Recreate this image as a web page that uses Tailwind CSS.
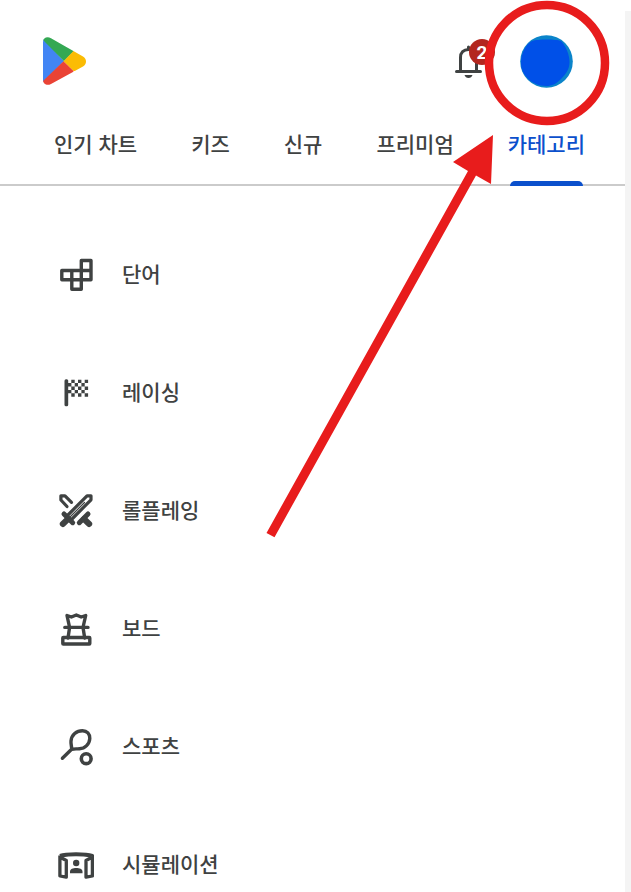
<!DOCTYPE html>
<html lang="ko">
<head>
<meta charset="utf-8">
<meta name="viewport" content="width=device-width, initial-scale=1">
<title>카테고리</title>
<script src="https://cdn.jsdelivr.net/npm/@tailwindcss/browser@4"></script>
</head>
<body class="bg-white">
<div class="relative flex h-screen overflow-hidden font-['Noto_Sans_CJK_KR',sans-serif] text-[21px] leading-8 font-medium text-[#3f4242]">
  <main class="flex min-w-0 flex-1 flex-col">
    <header class="flex h-[116px] shrink-0 items-center justify-between pt-1.5 pr-[52px] pl-[42px]">
      <a href="#" aria-label="Play 스토어">
        <svg class="h-12 w-11" viewBox="0 0 44 48">
          <defs><clipPath id="play"><path d="M1 5C1 1 5-1 9 1.200L41 19.500C45 22 45 27 41 29.500L9 47C5 49.200 1 47 1 43Z"/></clipPath></defs>
          <g clip-path="url(#play)">
            <path fill="#4285f4" d="M0 0L22 24.300L0 46Z"/>
            <path fill="#34a853" d="M0 2L22 24.300L32 14V-2H0Z"/>
            <path fill="#fbbc04" d="M21.500 24.300L31.500 14L48 14V34H31.500Z"/>
            <path fill="#ea4335" d="M0 45L21.500 24.300L31.500 34V50H0Z"/>
          </g>
        </svg>
      </a>
      <div class="flex items-center gap-[38px]">
        <button type="button" aria-label="알림 2개" class="relative h-9 w-[27px]">
          <svg class="h-9 w-[27px]" viewBox="0 0 27 36" fill="none" stroke="#3f4242" stroke-width="3">
            <path d="M1.500 28.500H25.500" stroke-linecap="round"/>
            <path d="M5.500 28V14.500C5.500 9.500 8.500 6.500 13.500 6.500S21.500 9.500 21.500 14.500V28"/>
            <path d="M13.500 6V4" stroke-linecap="round"/>
            <path d="M9.500 32H17.500Q16.500 35 13.500 35T9.500 32Z" fill="#3f4242" stroke="none"/>
          </svg>
          <span class="absolute -top-1 left-[14px] flex h-[26px] w-[26px] items-center justify-center rounded-full bg-[#b3261e] font-[Roboto,sans-serif] text-[19px] leading-none font-bold text-white">2</span>
        </button>
        <button type="button" aria-label="프로필" class="h-[53px] w-[53px]">
          <svg class="h-[53px] w-[53px]" viewBox="0 0 53 53">
            <circle cx="26.500" cy="26.500" r="26.300" fill="#0b84ca"/>
            <path fill="#0050e8" d="M12 6C18 4 36 4 41 6C46 11 49.500 20 49.500 27C49.500 34 46 39 41 44C36 49 32 51 26 51C12 51 1 40 1 28C1 18 6 9 12 6Z"/>
          </svg>
        </button>
      </div>
    </header>
    <nav class="flex h-[70px] shrink-0 justify-end gap-[54px] border-b-2 border-[#cbcbcb] pr-10 whitespace-nowrap">
      <a href="#" class="pt-[11px]">인기 차트</a>
      <a href="#" class="pt-[11px]">키즈</a>
      <a href="#" class="pt-[11px]">신규</a>
      <a href="#" class="pt-[11px]">프리미엄</a>
      <a href="#" aria-current="page" class="relative pt-[11px] text-[#0b50cc]">카테고리
        <span class="absolute inset-x-[2px] -bottom-0.5 h-[5px] rounded-t-full bg-[#0b50cc]"></span>
      </a>
    </nav>
    <ul class="pt-[29px]">
      <li><a href="#" class="flex h-[118px] items-center gap-7 pl-[58px]">
        <svg class="h-9 w-9 shrink-0" viewBox="0 0 36 36" fill="none" stroke="#3f4242" stroke-width="3.400" stroke-linejoin="round"><path d="M3.800 14.500H33V23.800H3.800ZM13.800 14.500V33.300H23.300V4.500H33V23.800"/></svg>
        <span class="pb-0.5">단어</span></a></li>
      <li><a href="#" class="flex h-[118px] items-center gap-7 pl-[58px]">
        <svg class="h-9 w-9 shrink-0" viewBox="0 0 36 36" fill="#3f4242"><rect x="6.500" y="5.300" width="3.700" height="27" rx="1.500"/><path d="M13.300 5.700h3.400v3.400h-3.400zM20 5.700h3.400v3.400H20zM26.700 5.700h3.400v3.400h-3.400zM10 9.100h3.400v3.400H10zM16.700 9.100H20v3.400h-3.300zM23.400 9.100h3.300v3.400h-3.300zM13.300 12.500h3.400v3.400h-3.400zM20 12.500h3.400v3.400H20zM26.700 12.500h3.400v3.400h-3.400zM10 15.900h3.400v3.400H10zM16.700 15.900H20v3.400h-3.300zM23.400 15.900h3.300v3.400h-3.300zM13.300 19.300h3.400v3.400h-3.400zM20 19.300h3.400v3.400H20zM26.700 19.300h3.400v3.400h-3.400z"/></svg>
        <span class="pb-0.5">레이싱</span></a></li>
      <li><a href="#" class="flex h-[118px] items-center gap-7 pl-[58px]">
        <svg class="h-9 w-9 shrink-0 overflow-visible" viewBox="0 0 36 36" fill="none" stroke="#3f4242" stroke-width="3.200" stroke-linecap="round" stroke-linejoin="round"><path d="M9.500 23.500L29 3.800H33V7.800L13.500 27.500"/><path d="M12.500 24.500L26.500 10.500" stroke-width="1.200"/><path d="M9 14.500L2.900 8V3.800H7L13.500 10.300"/><path d="M6 22L14.700 30.700M30 22L21.300 30.700" stroke-width="5"/><path d="M10 27L4.800 32M26 27L31.200 32" stroke-width="6"/></svg>
        <span class="pb-0.5">롤플레잉</span></a></li>
      <li><a href="#" class="flex h-[118px] items-center gap-7 pl-[58px]">
        <svg class="h-9 w-9 shrink-0" viewBox="0 0 36 36" fill="none" stroke="#3f4242" stroke-width="3.400" stroke-linecap="round" stroke-linejoin="round"><path d="M11.500 17L9 5.500L13.400 7L18.300 5L23.200 7L27.700 5.500L25.100 17M6.800 17.400H30M11.500 18L10 28M25.100 18L26.700 28"/><rect x="4.800" y="27.500" width="27" height="6.500" rx="0.500"/></svg>
        <span class="pb-0.5">보드</span></a></li>
      <li><a href="#" class="flex h-[118px] items-center gap-7 pl-[58px]">
        <svg class="h-9 w-9 shrink-0 overflow-visible" viewBox="0 0 36 36" fill="none" stroke="#3f4242" stroke-width="3.400" stroke-linecap="round" stroke-linejoin="round"><path d="M13.600 21.300C13.800 18 12.700 16 13 13C13.500 7 18.500 2.700 24.500 2.700C29 2.700 32 6 31.800 10.500C31.500 16 27 20.500 21.500 20.800C18.500 21 16.500 20.500 13.600 21.300L4.400 30.200"/><circle cx="28.200" cy="30.700" r="4.900" stroke-width="3.600"/></svg>
        <span class="pb-0.5">스포츠</span></a></li>
      <li><a href="#" class="flex h-[118px] items-center gap-7 pl-[58px]">
        <svg class="h-9 w-9 shrink-0" viewBox="0 0 36 36" fill="none" stroke="#3f4242" stroke-width="3.300" stroke-linejoin="round"><path d="M1.900 9.500C8 7.500 28 7.500 34.400 9.500V30L28 31.200V14.500L34.400 11M1.900 9.500V30L8.300 31.200V14.500L1.900 11"/><path d="M3 10.500C11 9.200 25 9.200 33.500 10.500" stroke-width="2"/><g fill="#3f4242" stroke="none"><circle cx="18.200" cy="17" r="3.200"/><path d="M12 27.300V25.500C12 23 15 22 18.200 22S24.500 23 24.500 25.500V27.300Z"/></g></svg>
        <span class="pb-0.5">시뮬레이션</span></a></li>
    </ul>
  </main>
  <div class="mt-[11px] w-1.5 shrink-0 bg-[#f4f4f4]"></div>
  <!-- Callout ring and arrow pointing at the profile button -->
  <svg class="pointer-events-none absolute top-0 right-0 h-[540px] w-[371px]" viewBox="260 0 371 540" aria-hidden="true">
    <circle cx="547" cy="63" r="58" fill="none" stroke="#e81c1c" stroke-width="8.500"/>
    <path fill="#e81c1c" d="M493 135L453 162L468 171L266.500 533L274.500 537.200L476 175.500L491 184Z"/>
  </svg>
</div>
</body>
</html>
